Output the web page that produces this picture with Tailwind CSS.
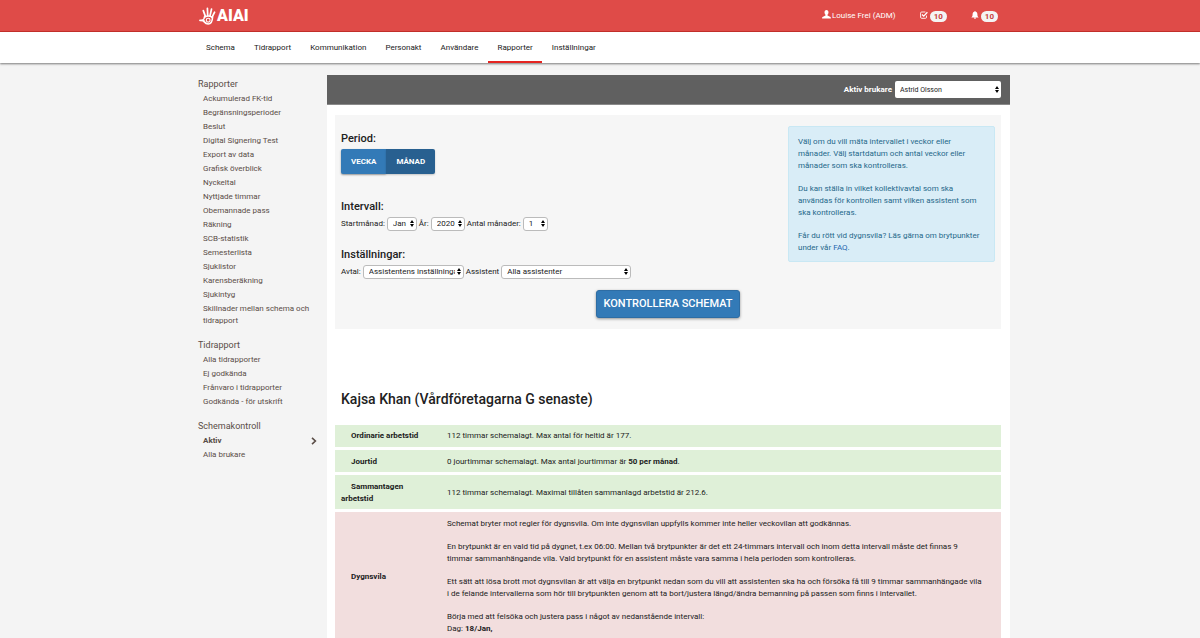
<!DOCTYPE html>
<html lang="sv">
    <head>
        <meta charset="UTF-8">
        <meta name="viewport" content="width=device-width, initial-scale=1.0">
        <title>Schemakontroll</title>
        <script src="https://cdn.jsdelivr.net/npm/@tailwindcss/browser@4"></script>
    </head>
    <body class="min-h-screen bg-[#f4f4f4] font-['Roboto','Liberation_Sans',sans-serif] text-[8px] leading-3 text-[#212121]">

        <!-- Header -->
        <header class="bg-[#df4b48] border-b border-[#c9302c] text-white">
            <div class="max-w-[820px] mx-auto h-[31px] pt-px pl-[9px] pr-3 flex items-center justify-between">
                <a href="#" class="flex items-center text-[16px] leading-4 font-black">
                    <svg class="w-[18px] h-[18px]" viewBox="0 0 18 18" fill="none" stroke="currentColor" stroke-linecap="round" aria-hidden="true">
                        <path d="M6.4 9.4 4.3 3.6M8.7 8.6 8.4 1.4M11 8.8 12.5 2.2M13 10.4 15.6 5.2" stroke-width="1.7"/>
                        <path d="M1 13.4 4.8 13.6" stroke-width="1.8"/>
                        <path d="M5.6 9.5C5.4 12 5 12.6 3.4 13.3 5 13.6 5.6 17 9.2 17 12.2 17 13.4 14 13.6 10" stroke-width="1.6"/>
                        <path d="M6 9.8C8 8.8 11 8.8 13 10.2" stroke-width="1.6"/>
                        <circle cx="9.2" cy="13.2" r="1.9" stroke-width="1.1"/>
                    </svg>
                    <span>AIAI</span>
                </a>
                <div class="flex items-center gap-6">
                    <a href="#" class="flex items-center gap-px">
                        <svg class="w-[9px] h-[9px] -mt-1" viewBox="0 0 9 9" fill="currentColor" aria-hidden="true"><path d="M4.5 0C5.8 0 6.5 1 6.5 2.3 6.5 3.4 6 4.2 5.5 4.7V5.6L8 6.7C8.7 7 8.9 7.4 8.9 8.4H.1C.1 7.4.3 7 1 6.7L3.5 5.6V4.7C3 4.2 2.5 3.4 2.5 2.3 2.5 1 3.2 0 4.5 0Z"/></svg>
                        Louise Frei (ADM)
                    </a>
                    <a href="#" class="flex items-center gap-[2px]">
                        <svg class="w-2 h-2 -mt-[2px]" viewBox="0 0 8 8" fill="none" stroke="currentColor" aria-hidden="true"><path d="M5.4 1H1.7Q.6 1 .6 2.1V6.2Q.6 7.3 1.7 7.3H5.4Q6.5 7.3 6.5 6.2V4.6" stroke-width=".9"/><path d="M2 3.5 3.7 5.1 7.4 1.3" stroke-width="1.3"/></svg>
                        <span class="bg-[#f4f4f4] text-[#c9403d] rounded-full px-1 leading-[11px] font-bold">10</span>
                    </a>
                    <a href="#" class="flex items-center gap-[2px]">
                        <svg class="w-2 h-2 -mt-[2px]" viewBox="0 0 8 8" fill="currentColor" aria-hidden="true"><path d="M4 0Q4.6 0 4.6.7C6 1 6.4 2 6.4 3.2 6.4 5 6.8 5.7 7.8 6.5H.2C1.2 5.7 1.6 5 1.6 3.2 1.6 2 2 1 3.4.7 3.4.2 3.6 0 4 0ZM3 6.8H5Q5 7.9 4 7.9 3 7.9 3 6.8Z"/></svg>
                        <span class="bg-[#f4f4f4] text-[#c9403d] rounded-full px-1 leading-[11px] font-bold">10</span>
                    </a>
                </div>
            </div>
        </header>

        <!-- Main menu -->
        <nav class="bg-white shadow-[0_1px_2px_rgba(0,0,0,0.5)]">
            <div class="max-w-[820px] mx-auto h-[31px] px-[7px] flex gap-px">
                <a href="#" class="px-[9px] pt-[10px] border-b-2 border-transparent">Schema</a>
                <a href="#" class="px-[9px] pt-[10px] border-b-2 border-transparent">Tidrapport</a>
                <a href="#" class="px-[9px] pt-[10px] border-b-2 border-transparent">Kommunikation</a>
                <a href="#" class="px-[9px] pt-[10px] border-b-2 border-transparent">Personakt</a>
                <a href="#" class="px-[9px] pt-[10px] border-b-2 border-transparent">Användare</a>
                <a href="#" class="px-[9px] pt-[10px] border-b-2 border-[#e52421]">Rapporter</a>
                <a href="#" class="px-[9px] pt-[10px] border-b-2 border-transparent">Inställningar</a>
            </div>
        </nav>

        <div class="max-w-[820px] mx-auto pt-3 flex">

            <!-- Side menu -->
            <aside class="w-[137px] shrink-0 pt-px pl-2 pr-[9px] flex flex-col gap-[9px] text-[#5a4d47]">
                <section>
                    <h2 class="text-[9px] leading-4">Rapporter</h2>
                    <ul class="pl-[5px] *:py-px">
                        <li><a href="#">Ackumulerad FK-tid</a></li>
                        <li><a href="#">Begränsningsperioder</a></li>
                        <li><a href="#">Beslut</a></li>
                        <li><a href="#">Digital Signering Test</a></li>
                        <li><a href="#">Export av data</a></li>
                        <li><a href="#">Grafisk överblick</a></li>
                        <li><a href="#">Nyckeltal</a></li>
                        <li><a href="#">Nyttjade timmar</a></li>
                        <li><a href="#">Obemannade pass</a></li>
                        <li><a href="#">Räkning</a></li>
                        <li><a href="#">SCB-statistik</a></li>
                        <li><a href="#">Semesterlista</a></li>
                        <li><a href="#">Sjuklistor</a></li>
                        <li><a href="#">Karensberäkning</a></li>
                        <li><a href="#">Sjukintyg</a></li>
                        <li><a href="#">Skillnader mellan schema och tidrapport</a></li>
                    </ul>
                </section>
                <section>
                    <h2 class="text-[9px] leading-4">Tidrapport</h2>
                    <ul class="pl-[5px] *:py-px">
                        <li><a href="#">Alla tidrapporter</a></li>
                        <li><a href="#">Ej godkända</a></li>
                        <li><a href="#">Frånvaro i tidrapporter</a></li>
                        <li><a href="#">Godkända - för utskrift</a></li>
                    </ul>
                </section>
                <section>
                    <h2 class="text-[9px] leading-4">Schemakontroll</h2>
                    <ul class="pl-[5px] *:py-px">
                        <li>
                            <a href="#" class="flex items-center justify-between font-bold">
                                Aktiv
                                <svg class="w-2 h-2" viewBox="0 0 8 8" fill="none" stroke="currentColor" stroke-width="1.6" aria-hidden="true"><path d="M2 .8 5.4 4 2 7.2"/></svg>
                            </a>
                        </li>
                        <li><a href="#">Alla brukare</a></li>
                    </ul>
                </section>
            </aside>

            <!-- Content -->
            <main class="grow min-w-0 bg-white">
                <div class="h-[30px] bg-[#606060] border-b border-[#8a8a8a] pr-[9px] flex items-center justify-end gap-[3px]">
                    <label for="brukare" class="text-white font-bold">Aktiv brukare</label>
                    <span class="relative">
                        <select id="brukare" class="block appearance-none w-[106px] h-[17px] pl-[5px] bg-white rounded-xs text-[7px]">
                            <option>Astrid Olsson</option>
                        </select>
                        <svg class="absolute right-[2px] top-[5px] w-1 h-[7px] pointer-events-none" viewBox="0 0 4 7" aria-hidden="true"><path d="M2 0 4 3H0ZM2 7 0 4H4Z"/></svg>
                    </span>
                </div>

                <form class="ml-2 mr-[9px] mt-[10px] px-[6px] pt-[11px] pb-[11px] bg-[#f6f6f6]">
                    <div class="flex justify-between items-start">
                        <div>
                            <h3 class="mt-[5px] text-[11px] leading-4 font-medium">Period:</h3>
                            <div class="mt-[2px] flex text-white font-bold">
                                <button type="button" class="h-[25px] px-[10px] bg-[#337ab7] rounded-l-xs shadow-[0_1px_2px_rgba(0,0,0,0.4)]">VECKA</button>
                                <button type="button" class="h-[25px] px-[10px] bg-[#286090] rounded-r-xs shadow-[0_1px_2px_rgba(0,0,0,0.2)]">MÅNAD</button>
                            </div>

                            <h3 class="mt-[25px] text-[11px] leading-4 font-medium">Intervall:</h3>
                            <div class="mt-[2px] flex items-center gap-[2px]">
                                <label for="manad">Startmånad:</label>
                                <span class="relative">
                                    <select id="manad" class="block appearance-none w-[30px] h-[14px] pl-[5px] bg-white border border-[#bbb] rounded-[3px]">
                                        <option>Jan</option>
                                    </select>
                                    <svg class="absolute right-[3px] top-[3px] w-1 h-[7px] pointer-events-none" viewBox="0 0 4 7" aria-hidden="true"><path d="M2 0 4 3H0ZM2 7 0 4H4Z"/></svg>
                                </span>
                                <label for="ar">År:</label>
                                <span class="relative">
                                    <select id="ar" class="block appearance-none w-[34px] h-[14px] pl-[5px] bg-white border border-[#bbb] rounded-[3px]">
                                        <option>2020</option>
                                    </select>
                                    <svg class="absolute right-[3px] top-[3px] w-1 h-[7px] pointer-events-none" viewBox="0 0 4 7" aria-hidden="true"><path d="M2 0 4 3H0ZM2 7 0 4H4Z"/></svg>
                                </span>
                                <label for="antal">Antal månader:</label>
                                <span class="relative">
                                    <select id="antal" class="block appearance-none w-[25px] h-[14px] pl-[5px] bg-white border border-[#bbb] rounded-[3px]">
                                        <option>1</option>
                                    </select>
                                    <svg class="absolute right-[3px] top-[3px] w-1 h-[7px] pointer-events-none" viewBox="0 0 4 7" aria-hidden="true"><path d="M2 0 4 3H0ZM2 7 0 4H4Z"/></svg>
                                </span>
                            </div>

                            <h3 class="mt-4 text-[11px] leading-4 font-medium">Inställningar:</h3>
                            <div class="mt-[2px] flex items-center gap-[2px]">
                                <label for="avtal">Avtal:</label>
                                <span class="relative">
                                    <select id="avtal" class="block appearance-none w-[101px] h-[14px] pl-[5px] pr-2 bg-white border border-[#bbb] rounded-[3px]">
                                        <option>Assistentens inställningar</option>
                                    </select>
                                    <svg class="absolute right-[3px] top-[3px] w-1 h-[7px] pointer-events-none" viewBox="0 0 4 7" aria-hidden="true"><path d="M2 0 4 3H0ZM2 7 0 4H4Z"/></svg>
                                </span>
                                <label for="assistent">Assistent</label>
                                <span class="relative">
                                    <select id="assistent" class="block appearance-none w-[130px] h-[14px] pl-[5px] bg-white border border-[#bbb] rounded-[3px]">
                                        <option>Alla assistenter</option>
                                    </select>
                                    <svg class="absolute right-[3px] top-[3px] w-1 h-[7px] pointer-events-none" viewBox="0 0 4 7" aria-hidden="true"><path d="M2 0 4 3H0ZM2 7 0 4H4Z"/></svg>
                                </span>
                            </div>
                        </div>

                        <!-- Help box -->
                        <div class="w-[207px] shrink-0 px-[9px] pt-[9px] pb-[7px] flex flex-col gap-[11px] bg-[#d9edf7] border border-[#c9e8f4] rounded-xs text-[#25688a]">
                            <p>Välj om du vill mäta intervallet i veckor eller månader. Välj startdatum och antal veckor eller månader som ska kontrolleras.</p>
                            <p>Du kan ställa in vilket kollektivavtal som ska användas för kontrollen samt vilken assistent som ska kontrolleras.</p>
                            <p>Får du rött vid dygnsvila? Läs gärna om brytpunkter under vår <a href="#" class="text-[#2467b0]">FAQ</a>.</p>
                        </div>
                    </div>
                    <div class="mt-[11px] flex justify-center">
                        <button type="button" class="h-7 px-[6px] bg-[#337ab7] border border-[#2e6da4] rounded-[3px] text-white text-[11px] font-medium shadow-[0_1px_3px_rgba(0,0,0,0.4)]">KONTROLLERA SCHEMAT</button>
                    </div>
                </form>

                <!-- Results -->
                <h1 class="mt-[60px] ml-[14px] text-[14px] leading-5 font-medium">Kajsa Khan (Vårdföretagarna G senaste)</h1>
                <div class="mt-4 ml-2 mr-[9px]">
                    <table class="w-full table-fixed border-separate border-spacing-0 text-left">
                        <tr class="bg-[#dff0d8]">
                            <th class="w-[106px] px-[6px] py-[5px] border-b-3 border-white indent-[10px] font-bold">Ordinarie arbetstid</th>
                            <td class="px-[6px] py-[5px] border-b-3 border-white">112 timmar schemalagt. Max antal för heltid är 177.</td>
                        </tr>
                        <tr class="bg-[#dff0d8]">
                            <th class="px-[6px] pt-[6px] pb-1 border-b-3 border-white indent-[10px] font-bold">Jourtid</th>
                            <td class="px-[6px] pt-[6px] pb-1 border-b-3 border-white">0 jourtimmar schemalagt. Max antal jourtimmar är <b>50 per månad</b>.</td>
                        </tr>
                        <tr class="bg-[#dff0d8]">
                            <th class="px-[6px] pt-[6px] pb-1 border-b-3 border-white indent-[10px] font-bold">Sammantagen<br>arbetstid</th>
                            <td class="px-[6px] pt-[6px] pb-1 border-b-3 border-white">112 timmar schemalagt. Maximal tillåten sammanlagd arbetstid är 212.6.</td>
                        </tr>
                        <tr class="bg-[#f2dede]">
                            <th class="px-[6px] py-[6px] indent-[10px] font-bold">Dygnsvila</th>
                            <td class="pl-[6px] pr-4 py-[6px]">
                                <div class="flex flex-col gap-[11px]">
                                    <p>Schemat bryter mot regler för dygnsvila. Om inte dygnsvilan uppfylls kommer inte heller veckovilan att godkännas.</p>
                                    <p>En brytpunkt är en vald tid på dygnet, t.ex 06:00. Mellan två brytpunkter är det ett 24-timmars intervall och inom detta intervall måste det finnas 9 timmar sammanhängande vila. Vald brytpunkt för en assistent måste vara samma i hela perioden som kontrolleras.</p>
                                    <p>Ett sätt att lösa brott mot dygnsvilan är att välja en brytpunkt nedan som du vill att assistenten ska ha och försöka få till 9 timmar sammanhängade vila i de felande intervallerna som hör till brytpunkten genom att ta bort/justera längd/ändra bemanning på passen som finns i intervallet.</p>
                                    <p>Börja med att felsöka och justera pass i något av nedanstående intervall:<br>Dag: <b>18/Jan,</b></p>
                                </div>
                            </td>
                        </tr>
                    </table>
                </div>
            </main>
        </div>
    </body>
</html>
